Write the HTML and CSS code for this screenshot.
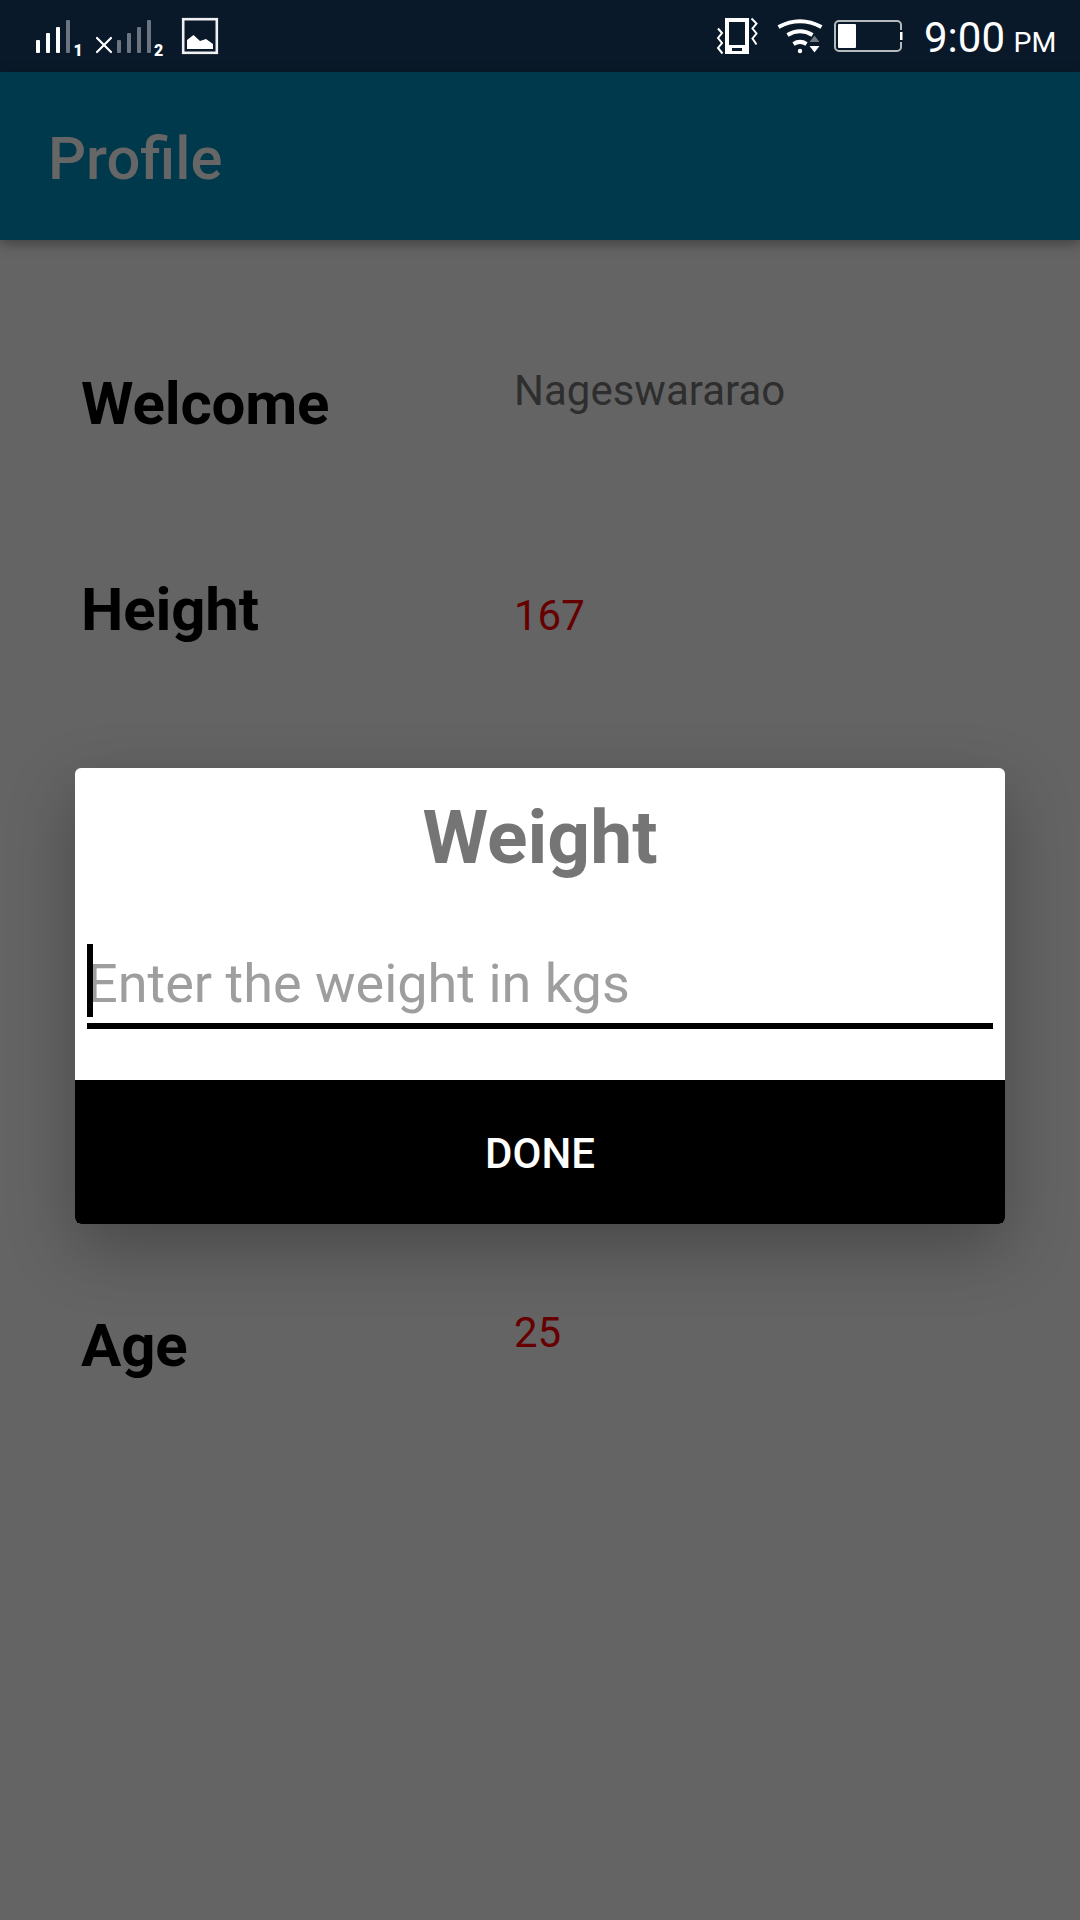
FILE: index.html
```html
<!DOCTYPE html>
<html lang="en">
<head>
<meta charset="utf-8">
<title>Profile</title>
<link rel="stylesheet" href="styles.css">
</head>
<body>
<div class="screen">
  <header class="status-bar">
    <svg class="status-left" width="220" height="72" viewBox="0 0 220 72">
      <g fill="#fff">
        <rect x="36" y="40" width="4" height="13" rx="1"/>
        <rect x="46" y="33" width="4" height="20" rx="1"/>
        <rect x="56" y="27" width="4" height="26" rx="1"/>
      </g>
      <g fill="#6c757f">
        <rect x="66" y="20" width="4" height="33" rx="1"/>
        <rect x="117" y="40" width="4" height="13" rx="1"/>
        <rect x="127" y="33" width="4" height="20" rx="1"/>
        <rect x="137" y="27" width="4" height="26" rx="1"/>
        <rect x="147" y="20" width="4" height="33" rx="1"/>
      </g>
      <text class="sim" x="73.500" y="56">1</text>
      <text class="sim" x="154" y="56">2</text>
      <path d="M97 38l14 14M111 38L97 52" stroke="#fff" stroke-width="2.200" stroke-linecap="round"/>
      <rect x="183.200" y="19.200" width="33.600" height="33.600" fill="none" stroke="#eef0f2" stroke-width="2.600"/>
      <path d="M187 49V40l6.500-5 6.500 6 6-2 7 5v5z" fill="#fff"/>
    </svg>
    <div class="status-right">
      <svg width="190" height="72" viewBox="715 0 190 72">
        <path d="M725 18h24v36h-24zM729 22v23h16V22zM732 48v3h10v-3z" fill="#fff" fill-rule="evenodd"/>
        <path d="M718 28.500l4 4.500-4 5 4 5-4 5 4.500 5.500M751.500 18.500l5 5-4 5 4 5-4 5 4 6" fill="none" stroke="#fff" stroke-width="2"/>
        <g fill="none" stroke="#fff" stroke-width="4">
          <path d="M778.500 27Q800 15.500 821.500 27"/>
          <path d="M787.500 35Q800 27.500 812.500 35"/>
          <path d="M793.500 44Q800 39.800 806.500 44"/>
        </g>
        <circle cx="800" cy="51" r="2.200" fill="#fff"/>
        <path d="M809.500 42h10l-5-6.500z" fill="#717981"/>
        <path d="M809.500 46h10l-5 6.500z" fill="#fff"/>
        <path d="M901 30v-5a4 4 0 0 0-4-4h-58a4 4 0 0 0-4 4v22a4 4 0 0 0 4 4h58a4 4 0 0 0 4-4v-5" fill="none" stroke="#b5babf" stroke-width="2"/>
        <rect x="838" y="24" width="18" height="24" rx="1" fill="#fff"/>
        <rect x="900" y="32" width="2.500" height="8" fill="#fff"/>
      </svg>
      <div class="clock">9:00 <span class="meridiem">PM</span></div>
    </div>
  </header>
  <div class="app-bar"><h1 class="app-title">Profile</h1></div>
  <main class="profile">
    <div class="label">Welcome</div><div class="value name">Nageswararao</div>
    <div class="label">Height</div><div class="value height">167</div>
    <div class="label">Age</div><div class="value age">25</div>
  </main>
  <section class="dialog">
    <h2 class="dialog-title">Weight</h2>
    <div class="field"><span class="hint">Enter the weight in kgs</span><span class="caret"></span></div>
    <button class="done" type="button">DONE</button>
  </section>
</div>
</body>
</html>
```
FILE: styles.css
```css
* { box-sizing: border-box; }
body { margin: 0; font-family: Roboto, sans-serif; background: #646464; }
h1, h2 { margin: 0; }
svg { display: block; }

.screen {
  position: relative;
  width: 1080px;
  height: 1920px;
  overflow: hidden;
  background: #646464;
}

.status-bar {
  display: flex;
  justify-content: space-between;
  height: 72px;
  background: #091929;
}
.sim { font: 900 16px Roboto, sans-serif; fill: #fff; }
.status-right { display: flex; width: 365px; }
.clock {
  margin-left: 19px;
  font-size: 42px;
  line-height: 76px;
  color: #fff;
  white-space: nowrap;
}
.meridiem { margin-left: -2px; font-size: 28.500px; }

.app-bar {
  height: 168px;
  padding: 49px 48px 0;
  background: #00394b;
  box-shadow: 0 4px 12px rgba(0, 0, 0, .35);
}
.app-title { font-size: 59.700px; line-height: 76px; font-weight: 500; color: #666; }

.profile {
  display: grid;
  grid-template-columns: 433px 1fr;
  grid-template-rows: 206px 736px auto;
  padding: 128px 0 0 81px;
}
.label { font-size: 60px; line-height: 71px; font-weight: 700; letter-spacing: -.15px; color: #000; }
.value { font-size: 42px; line-height: 50px; color: #600; }
.name { margin-top: -2px; color: #2e2e2e; }
.height { margin-top: 17px; }
.age { margin-top: -2px; }

.dialog {
  position: absolute;
  left: 75px;
  top: 768px;
  width: 930px;
  height: 456px;
  display: flex;
  flex-direction: column;
  overflow: hidden;
  border-radius: 6px;
  background: #fff;
  box-shadow: 0 24px 66px rgba(0, 0, 0, .28);
}
.dialog-title {
  padding-top: 25px;
  font-size: 75px;
  line-height: 88px;
  font-weight: 700;
  text-align: center;
  color: #757575;
}
.field {
  display: flex;
  position: relative;
  height: 85px;
  margin: 63px 12px 0;
  border-bottom: 6px solid #000;
}
.hint { font-size: 54px; line-height: 79px; color: #9e9e9e; }
.caret { position: absolute; left: 0; top: 0; width: 6px; height: 73px; background: #000; }
.done {
  height: 144px;
  margin-top: auto;
  padding: 2px 0 0;
  border: 0;
  background: #000;
  color: #fff;
  font: 500 42px Roboto, sans-serif;
}
```
